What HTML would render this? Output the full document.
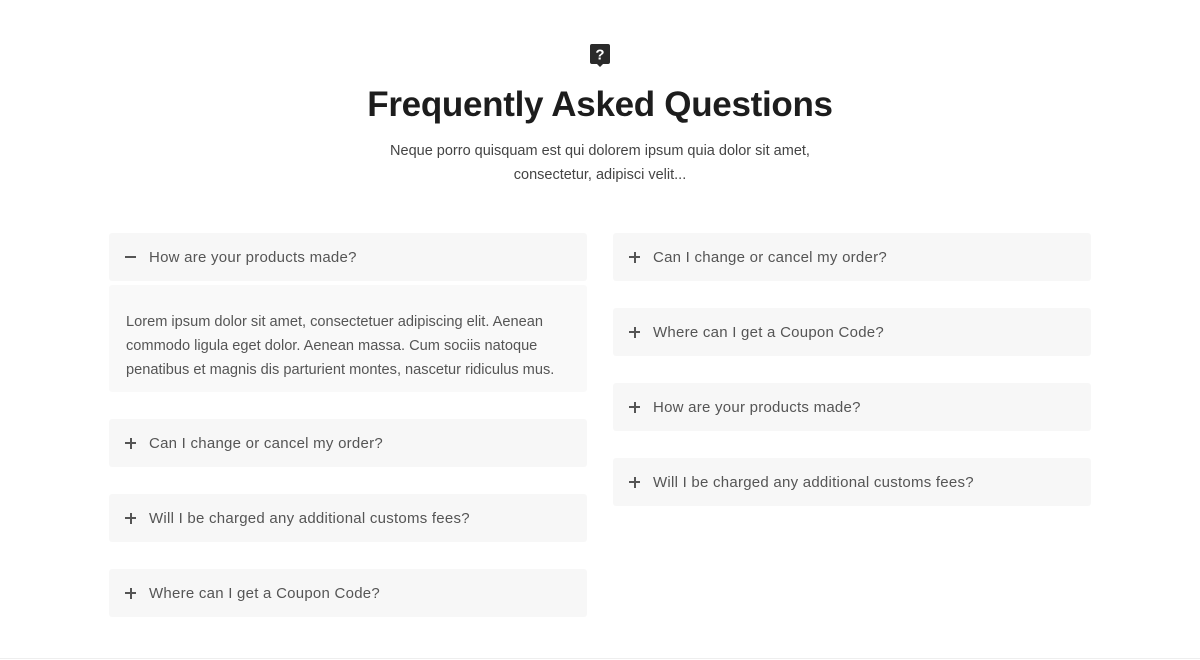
<!DOCTYPE html>
<html><head><meta charset="utf-8"><style>
*{margin:0;padding:0;box-sizing:border-box}
body{width:1200px;height:660px;background:#fff;font-family:"Liberation Sans",sans-serif;position:relative;overflow:hidden}
.ico{position:absolute;left:590px;top:44px}
h1{position:absolute;top:85px;left:0;width:1200px;text-align:center;font-size:35px;font-weight:bold;color:#1d1d1d;letter-spacing:-0.3px}
.sub{position:absolute;top:139px;left:0;width:1200px;text-align:center;font-size:14.5px;line-height:24px;color:#444}
.q{position:absolute;width:478px;height:48px;background:#f7f7f7;border-radius:3px;font-size:15px;color:#555;line-height:50px;padding-left:40px;letter-spacing:0.25px}
.q::before{content:"";position:absolute;left:16px;top:23px;width:11px;height:2px;background:#555}
.q.p::after{content:"";position:absolute;left:20.5px;top:18.5px;width:2px;height:11px;background:#555}
.a{position:absolute;left:109px;top:285px;width:478px;height:107px;background:#f9f9f9;border-radius:3px;padding:25px 17px;font-size:14.6px;line-height:24px;color:#555}
.line{position:absolute;left:0;top:658px;width:1200px;height:1px;background:#eee}
</style></head><body>
<svg class="ico" width="20" height="23" viewBox="0 0 20 23"><path d="M2 0h16a2 2 0 0 1 2 2v16a2 2 0 0 1-2 2h-5l-3 3-3-3H2a2 2 0 0 1-2-2V2a2 2 0 0 1 2-2z" fill="#2a2a2a"/><text x="10" y="15.5" text-anchor="middle" font-family="Liberation Sans" font-weight="bold" font-size="15" fill="#fff">?</text></svg>
<h1>Frequently Asked Questions</h1>
<div class="sub">Neque porro quisquam est qui dolorem ipsum quia dolor sit amet,<br>consectetur, adipisci velit...</div>
<div class="q" style="left:109px;top:233px">How are your products made?</div>
<div class="a">Lorem ipsum dolor sit amet, consectetuer adipiscing elit. Aenean commodo ligula eget dolor. Aenean massa. Cum sociis natoque penatibus et magnis dis parturient montes, nascetur ridiculus mus.</div>
<div class="q p" style="left:109px;top:419px">Can I change or cancel my order?</div>
<div class="q p" style="left:109px;top:494px">Will I be charged any additional customs fees?</div>
<div class="q p" style="left:109px;top:569px">Where can I get a Coupon Code?</div>
<div class="q p" style="left:613px;top:233px">Can I change or cancel my order?</div>
<div class="q p" style="left:613px;top:308px">Where can I get a Coupon Code?</div>
<div class="q p" style="left:613px;top:383px">How are your products made?</div>
<div class="q p" style="left:613px;top:458px">Will I be charged any additional customs fees?</div>
<div class="line"></div>
</body></html>
